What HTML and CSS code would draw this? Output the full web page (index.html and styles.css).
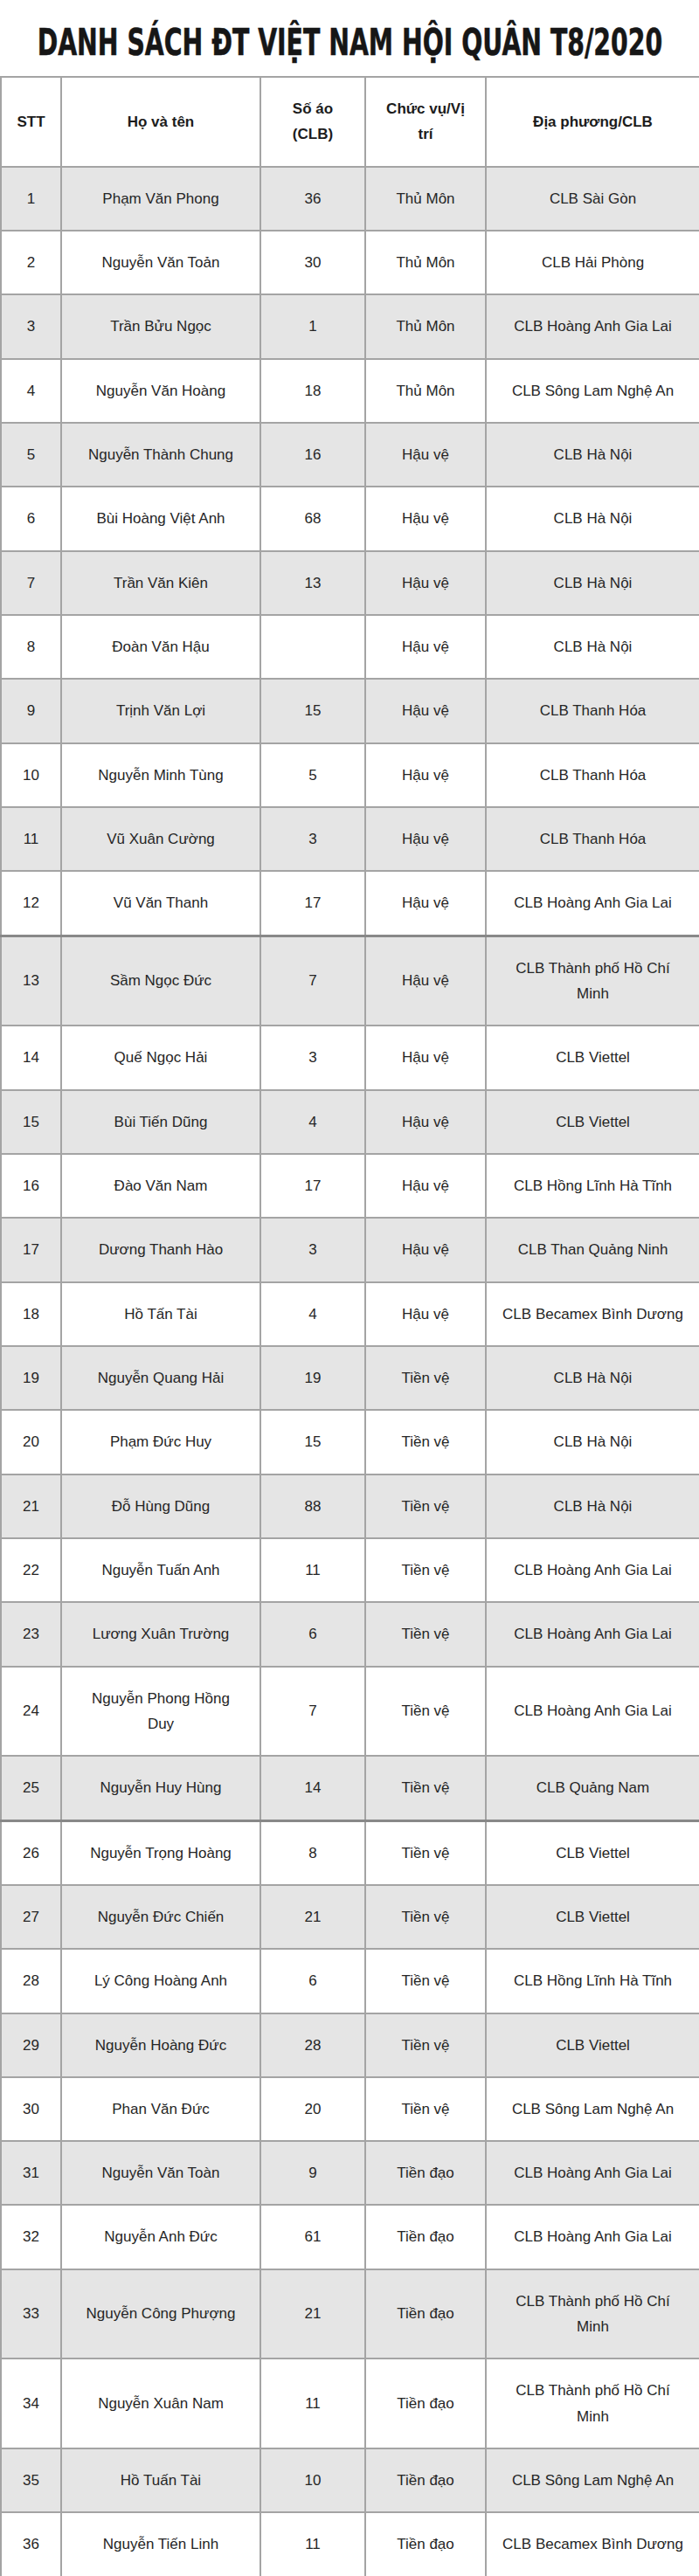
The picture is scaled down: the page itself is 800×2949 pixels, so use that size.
FILE: index.html
```html
<!DOCTYPE html>
<html lang="vi">
<head>
<meta charset="utf-8">
<title>Danh sách ĐT Việt Nam hội quân T8/2020</title>
<link rel="stylesheet" href="styles.css">
</head>
<body>
<h1 class="title"><span class="title-text">DANH SÁCH ĐT VIỆT NAM HỘI QUÂN T8/2020</span></h1>
<table class="roster">
  <colgroup>
    <col class="c-stt"><col class="c-name"><col class="c-num"><col class="c-pos"><col class="c-club">
  </colgroup>
  <thead>
    <tr><th>STT</th><th>Họ và tên</th><th>Số áo<br>(CLB)</th><th>Chức vụ/Vị<br>trí</th><th>Địa phương/CLB</th></tr>
  </thead>
  <tbody>
    <tr><td>1</td><td>Phạm Văn Phong</td><td>36</td><td>Thủ Môn</td><td>CLB Sài Gòn</td></tr>
    <tr><td>2</td><td>Nguyễn Văn Toản</td><td>30</td><td>Thủ Môn</td><td>CLB Hải Phòng</td></tr>
    <tr><td>3</td><td>Trần Bửu Ngọc</td><td>1</td><td>Thủ Môn</td><td>CLB Hoàng Anh Gia Lai</td></tr>
    <tr><td>4</td><td>Nguyễn Văn Hoàng</td><td>18</td><td>Thủ Môn</td><td>CLB Sông Lam Nghệ An</td></tr>
    <tr><td>5</td><td>Nguyễn Thành Chung</td><td>16</td><td>Hậu vệ</td><td>CLB Hà Nội</td></tr>
    <tr><td>6</td><td>Bùi Hoàng Việt Anh</td><td>68</td><td>Hậu vệ</td><td>CLB Hà Nội</td></tr>
    <tr><td>7</td><td>Trần Văn Kiên</td><td>13</td><td>Hậu vệ</td><td>CLB Hà Nội</td></tr>
    <tr><td>8</td><td>Đoàn Văn Hậu</td><td></td><td>Hậu vệ</td><td>CLB Hà Nội</td></tr>
    <tr><td>9</td><td>Trịnh Văn Lợi</td><td>15</td><td>Hậu vệ</td><td>CLB Thanh Hóa</td></tr>
    <tr><td>10</td><td>Nguyễn Minh Tùng</td><td>5</td><td>Hậu vệ</td><td>CLB Thanh Hóa</td></tr>
    <tr><td>11</td><td>Vũ Xuân Cường</td><td>3</td><td>Hậu vệ</td><td>CLB Thanh Hóa</td></tr>
    <tr><td>12</td><td>Vũ Văn Thanh</td><td>17</td><td>Hậu vệ</td><td>CLB Hoàng Anh Gia Lai</td></tr>
    <tr class="break"><td>13</td><td>Sầm Ngọc Đức</td><td>7</td><td>Hậu vệ</td><td>CLB Thành phố Hồ Chí<br>Minh</td></tr>
    <tr><td>14</td><td>Quế Ngọc Hải</td><td>3</td><td>Hậu vệ</td><td>CLB Viettel</td></tr>
    <tr><td>15</td><td>Bùi Tiến Dũng</td><td>4</td><td>Hậu vệ</td><td>CLB Viettel</td></tr>
    <tr><td>16</td><td>Đào Văn Nam</td><td>17</td><td>Hậu vệ</td><td>CLB Hồng Lĩnh Hà Tĩnh</td></tr>
    <tr><td>17</td><td>Dương Thanh Hào</td><td>3</td><td>Hậu vệ</td><td>CLB Than Quảng Ninh</td></tr>
    <tr><td>18</td><td>Hồ Tấn Tài</td><td>4</td><td>Hậu vệ</td><td>CLB Becamex Bình Dương</td></tr>
    <tr><td>19</td><td>Nguyễn Quang Hải</td><td>19</td><td>Tiền vệ</td><td>CLB Hà Nội</td></tr>
    <tr><td>20</td><td>Phạm Đức Huy</td><td>15</td><td>Tiền vệ</td><td>CLB Hà Nội</td></tr>
    <tr><td>21</td><td>Đỗ Hùng Dũng</td><td>88</td><td>Tiền vệ</td><td>CLB Hà Nội</td></tr>
    <tr><td>22</td><td>Nguyễn Tuấn Anh</td><td>11</td><td>Tiền vệ</td><td>CLB Hoàng Anh Gia Lai</td></tr>
    <tr><td>23</td><td>Lương Xuân Trường</td><td>6</td><td>Tiền vệ</td><td>CLB Hoàng Anh Gia Lai</td></tr>
    <tr><td>24</td><td>Nguyễn Phong Hồng<br>Duy</td><td>7</td><td>Tiền vệ</td><td>CLB Hoàng Anh Gia Lai</td></tr>
    <tr><td>25</td><td>Nguyễn Huy Hùng</td><td>14</td><td>Tiền vệ</td><td>CLB Quảng Nam</td></tr>
    <tr class="break"><td>26</td><td>Nguyễn Trọng Hoàng</td><td>8</td><td>Tiền vệ</td><td>CLB Viettel</td></tr>
    <tr><td>27</td><td>Nguyễn Đức Chiến</td><td>21</td><td>Tiền vệ</td><td>CLB Viettel</td></tr>
    <tr><td>28</td><td>Lý Công Hoàng Anh</td><td>6</td><td>Tiền vệ</td><td>CLB Hồng Lĩnh Hà Tĩnh</td></tr>
    <tr><td>29</td><td>Nguyễn Hoàng Đức</td><td>28</td><td>Tiền vệ</td><td>CLB Viettel</td></tr>
    <tr><td>30</td><td>Phan Văn Đức</td><td>20</td><td>Tiền vệ</td><td>CLB Sông Lam Nghệ An</td></tr>
    <tr><td>31</td><td>Nguyễn Văn Toàn</td><td>9</td><td>Tiền đạo</td><td>CLB Hoàng Anh Gia Lai</td></tr>
    <tr><td>32</td><td>Nguyễn Anh Đức</td><td>61</td><td>Tiền đạo</td><td>CLB Hoàng Anh Gia Lai</td></tr>
    <tr><td>33</td><td>Nguyễn Công Phượng</td><td>21</td><td>Tiền đạo</td><td>CLB Thành phố Hồ Chí<br>Minh</td></tr>
    <tr><td>34</td><td>Nguyễn Xuân Nam</td><td>11</td><td>Tiền đạo</td><td>CLB Thành phố Hồ Chí<br>Minh</td></tr>
    <tr><td>35</td><td>Hồ Tuấn Tài</td><td>10</td><td>Tiền đạo</td><td>CLB Sông Lam Nghệ An</td></tr>
    <tr><td>36</td><td>Nguyễn Tiến Linh</td><td>11</td><td>Tiền đạo</td><td>CLB Becamex Bình Dương</td></tr>
  </tbody>
</table>
</body>
</html>
```
FILE: styles.css
```css
html, body {
  margin: 0;
  padding: 0;
  background: #ffffff;
}

body {
  font-family: "Liberation Sans", Arial, sans-serif;
  color: #262626;
}

.title {
  margin: 0;
  height: 87px;
  box-sizing: border-box;
  padding-top: 24px;
  display: flex;
  justify-content: center;
  overflow: hidden;
}

.title-text {
  display: block;
  flex: none;
  white-space: nowrap;
  font-family: "DejaVu Sans", sans-serif;
  font-weight: 700;
  font-size: 42.5px;
  line-height: 50px;
  color: #161616;
  transform: scaleX(0.667);
  transform-origin: center;
  -webkit-text-stroke: 0.6px #161616;
}

.roster {
  width: 800px;
  table-layout: fixed;
  border-collapse: collapse;
  font-size: 17px;
  line-height: 29.33px;
}

.c-stt { width: 69px; }
.c-name { width: 228px; }
.c-num { width: 120px; }
.c-pos { width: 138px; }
.c-club { width: 245px; }

.roster th,
.roster td {
  border: 2px solid #a4a4a4;
  padding: 21px 12px;
  text-align: center;
  vertical-align: middle;
  white-space: nowrap;
}

.roster th {
  font-weight: 700;
  color: #1c1c1c;
}

.roster tbody tr:nth-child(odd) {
  background: #e5e5e5;
}

.roster tr.break td {
  border-top: 3px solid #888888;
}
```
